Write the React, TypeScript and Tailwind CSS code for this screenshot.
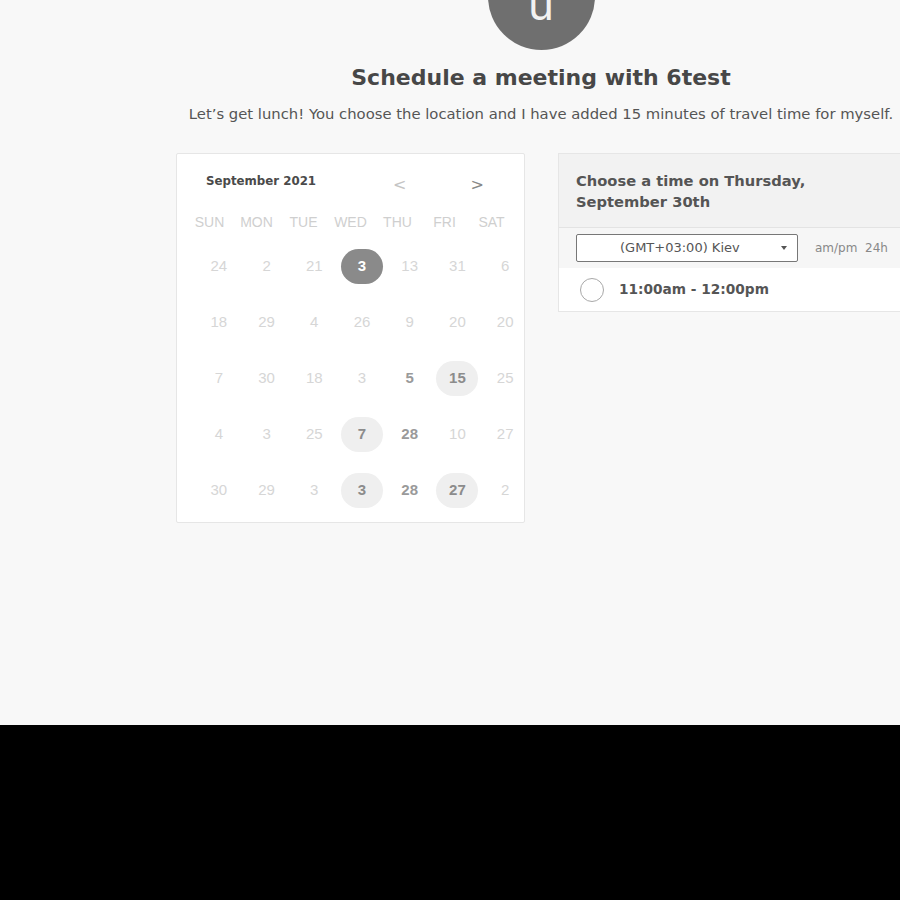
import React from "react";

type Cell = { n: string; kind?: "faded" | "bold" | "soft" | "sel" };

const rows: Cell[][] = [
  [{ n: "24" }, { n: "2" }, { n: "21" }, { n: "3", kind: "sel" }, { n: "13" }, { n: "31" }, { n: "6" }],
  [{ n: "18" }, { n: "29" }, { n: "4" }, { n: "26" }, { n: "9" }, { n: "20" }, { n: "20" }],
  [{ n: "7" }, { n: "30" }, { n: "18" }, { n: "3" }, { n: "5", kind: "bold" }, { n: "15", kind: "soft" }, { n: "25" }],
  [{ n: "4" }, { n: "3" }, { n: "25" }, { n: "7", kind: "soft" }, { n: "28", kind: "bold" }, { n: "10" }, { n: "27" }],
  [{ n: "30" }, { n: "29" }, { n: "3" }, { n: "3", kind: "soft" }, { n: "28", kind: "bold" }, { n: "27", kind: "soft" }, { n: "2" }],
];

const days = ["SUN", "MON", "TUE", "WED", "THU", "FRI", "SAT"];

function DayCell({ c }: { c: Cell }) {
  if (c.kind === "sel")
    return (
      <div className="flex h-[56px] items-center justify-center">
        <div className="flex h-[35px] w-[42px] items-center justify-center rounded-full bg-[#8a8a8a] text-[15px] font-bold text-white">
          {c.n}
        </div>
      </div>
    );
  if (c.kind === "soft")
    return (
      <div className="flex h-[56px] items-center justify-center">
        <div className="flex h-[35px] w-[42px] items-center justify-center rounded-full bg-[#efefef] text-[15px] font-bold text-[#8c8c8c]">
          {c.n}
        </div>
      </div>
    );
  return (
    <div
      className={
        c.kind === "bold"
          ? "flex h-[56px] items-center justify-center text-[15px] font-bold text-[#9a9a9a]"
          : "flex h-[56px] items-center justify-center text-[15px] text-[#d6d6d6]"
      }
    >
      {c.n}
    </div>
  );
}

const dv = { fontFamily: "'DejaVu Sans', sans-serif" };

export default function App() {
  return (
    <div className="w-[900px] overflow-hidden" style={{ fontFamily: "'Liberation Sans', Arial, sans-serif" }}>
      <div className="h-[725px] overflow-hidden bg-[#f8f8f8]">
        <div className="ml-[182px] flex w-[718px] flex-col items-center">
          <div className="-mt-[57px] flex h-[107px] w-[107px] items-end justify-center rounded-full bg-[#6f6f6f]">
            <span className="mb-[24px] text-[44px] leading-none text-[#f2f2f2]" style={{ fontFamily: "Inter, sans-serif" }}>u</span>
          </div>
          <h1 className="mt-[14px] text-[22px] font-bold leading-[28px] text-[#474747]" style={dv}>
            Schedule a meeting with 6test
          </h1>
          <p className="mt-[12px] whitespace-nowrap text-[14.8px] leading-[20px] text-[#555]" style={dv}>
            Let’s get lunch! You choose the location and I have added 15 minutes of travel time for myself.
          </p>
        </div>

        <div className="mt-[29px] flex gap-[33px] pl-[176px]">
          <div className="w-[349px] shrink-0 rounded-[2px] border border-[#e6e6e6] bg-white pb-[4px]">
            <div className="flex h-[56px] items-center">
              <span className="ml-[29px] text-[11.8px] font-bold text-[#4a4a4a]" style={dv}>September 2021</span>
              <span className="ml-[77px] mt-[6px] text-[16px] text-[#c4c4c4]" style={dv}>&lt;</span>
              <span className="ml-[64px] mt-[6px] text-[16px] text-[#888]" style={dv}>&gt;</span>
            </div>
            <div className="ml-[9px] mt-[5px] grid w-[329px] grid-cols-7">
              {days.map((d) => (
                <div key={d} className="text-center text-[14px] leading-[14px] text-[#cfcfcf]">
                  {d}
                </div>
              ))}
            </div>
            <div className="ml-[18px] mt-[9px] grid w-[334px] grid-cols-7">
              {rows.flat().map((c, i) => (
                <DayCell key={i} c={c} />
              ))}
            </div>
          </div>

          <div className="w-[360px] shrink-0 self-start border border-[#e6e6e6] bg-white">
            <div className="bg-[#f2f2f2] px-[17px] pb-[15px] pt-[16px] text-[14.7px] font-bold leading-[21px] text-[#555]" style={dv}>
              Choose a time on Thursday,
              <br />
              September 30th
            </div>
            <div className="flex items-center border-t border-[#e3e3e3] bg-[#f6f6f6] px-[17px] py-[6px]">
              <div className="relative flex h-[28px] w-[222px] items-center rounded-[2px] border border-[#777] bg-white">
                <span className="ml-[43px] text-[13px] text-[#555]" style={dv}>(GMT+03:00) Kiev</span>
                <span className="absolute right-[10px] top-[11px] h-0 w-0 border-x-[3.5px] border-t-[4px] border-x-transparent border-t-[#555]" />
              </div>
              <span className="ml-[17px] text-[12px] text-[#888]" style={dv}>am/pm&nbsp;&nbsp;24h</span>
            </div>
            <div className="flex h-[43px] items-center bg-white px-[21px]">
              <div className="h-[24px] w-[24px] rounded-full border-[1.5px] border-[#a8a8a8]" />
              <span className="ml-[15px] text-[13.7px] font-bold text-[#555]" style={dv}>11:00am - 12:00pm</span>
            </div>
          </div>
        </div>
      </div>
      <div className="h-[175px] bg-black" />
    </div>
  );
}
